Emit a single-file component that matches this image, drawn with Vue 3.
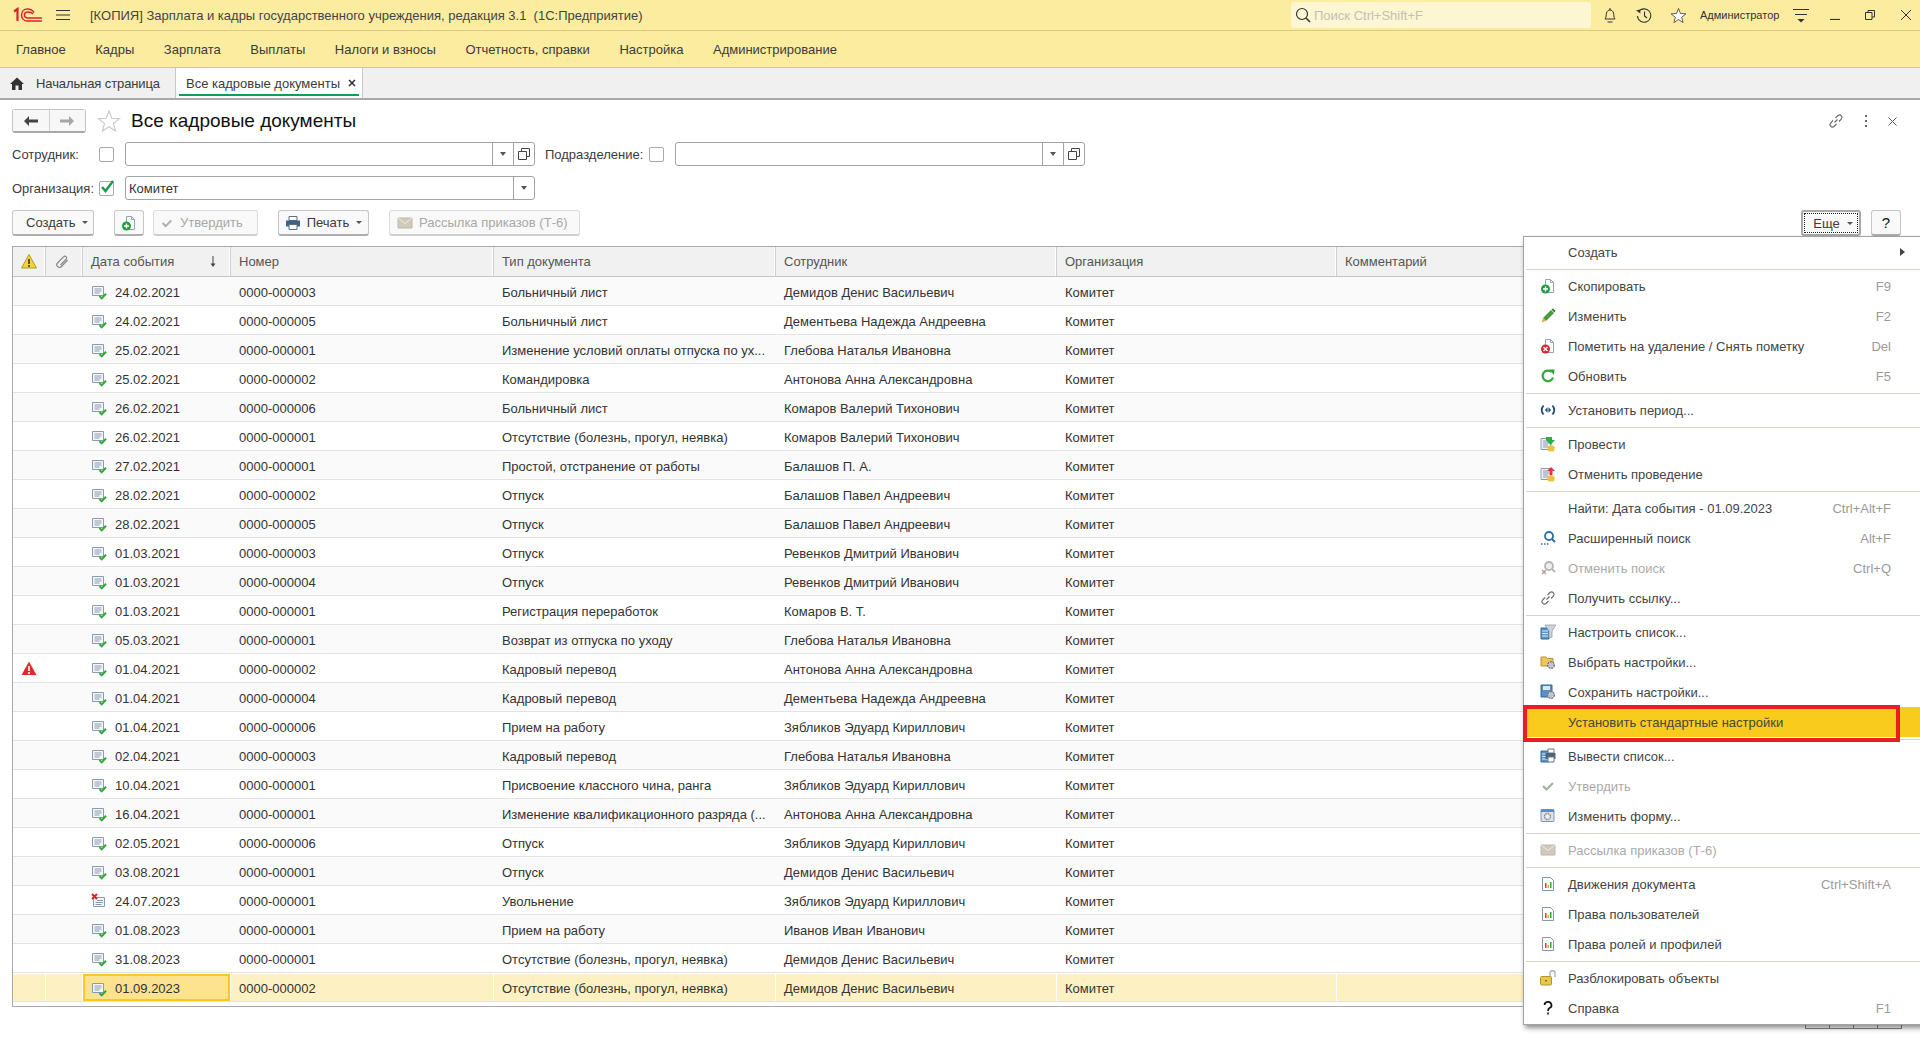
<script setup>
const mainMenu = ['Главное', 'Кадры', 'Зарплата', 'Выплаты', 'Налоги и взносы', 'Отчетность, справки', 'Настройка', 'Администрирование'];

const demidov = 'Демидов Денис Васильевич';
const dement = 'Дементьева Надежда Андреевна';
const glebova = 'Глебова Наталья Ивановна';
const antonova = 'Антонова Анна Александровна';
const komarov = 'Комаров Валерий Тихонович';
const balashov = 'Балашов Павел Андреевич';
const revenkov = 'Ревенков Дмитрий Иванович';
const zyablikov = 'Зябликов Эдуард Кириллович';
const absence = 'Отсутствие (болезнь, прогул, неявка)';

const rows = [
  ['24.02.2021', '0000-000003', 'Больничный лист', demidov],
  ['24.02.2021', '0000-000005', 'Больничный лист', dement],
  ['25.02.2021', '0000-000001', 'Изменение условий оплаты отпуска по ух...', glebova],
  ['25.02.2021', '0000-000002', 'Командировка', antonova],
  ['26.02.2021', '0000-000006', 'Больничный лист', komarov],
  ['26.02.2021', '0000-000001', absence, komarov],
  ['27.02.2021', '0000-000001', 'Простой, отстранение от работы', 'Балашов П. А.'],
  ['28.02.2021', '0000-000002', 'Отпуск', balashov],
  ['28.02.2021', '0000-000005', 'Отпуск', balashov],
  ['01.03.2021', '0000-000003', 'Отпуск', revenkov],
  ['01.03.2021', '0000-000004', 'Отпуск', revenkov],
  ['01.03.2021', '0000-000001', 'Регистрация переработок', 'Комаров В. Т.'],
  ['05.03.2021', '0000-000001', 'Возврат из отпуска по уходу', glebova],
  ['01.04.2021', '0000-000002', 'Кадровый перевод', antonova, 'warn'],
  ['01.04.2021', '0000-000004', 'Кадровый перевод', dement],
  ['01.04.2021', '0000-000006', 'Прием на работу', zyablikov],
  ['02.04.2021', '0000-000003', 'Кадровый перевод', glebova],
  ['10.04.2021', '0000-000001', 'Присвоение классного чина, ранга', zyablikov],
  ['16.04.2021', '0000-000001', 'Изменение квалификационного разряда (...', antonova],
  ['02.05.2021', '0000-000006', 'Отпуск', zyablikov],
  ['03.08.2021', '0000-000001', 'Отпуск', demidov],
  ['24.07.2023', '0000-000001', 'Увольнение', zyablikov, 'off'],
  ['01.08.2023', '0000-000001', 'Прием на работу', 'Иванов Иван Иванович'],
  ['31.08.2023', '0000-000001', absence, demidov],
  ['01.09.2023', '0000-000002', absence, demidov, 'sel']
];

// sep: true draws the thin line between groups
const popup = [
  { t: 'Создать', arrow: true },
  { sep: true },
  { t: 'Скопировать', i: 'i-copy', k: 'F9' },
  { t: 'Изменить', i: 'i-pencil', k: 'F2' },
  { t: 'Пометить на удаление / Снять пометку', i: 'i-del', k: 'Del' },
  { t: 'Обновить', i: 'i-refresh', k: 'F5' },
  { sep: true },
  { t: 'Установить период...', i: 'i-period' },
  { sep: true },
  { t: 'Провести', i: 'i-post' },
  { t: 'Отменить проведение', i: 'i-unpost' },
  { sep: true },
  { t: 'Найти: Дата события - 01.09.2023', k: 'Ctrl+Alt+F' },
  { t: 'Расширенный поиск', i: 'i-search', k: 'Alt+F' },
  { t: 'Отменить поиск', i: 'i-nosearch', k: 'Ctrl+Q', off: true },
  { t: 'Получить ссылку...', i: 'i-link' },
  { sep: true },
  { t: 'Настроить список...', i: 'i-filter' },
  { t: 'Выбрать настройки...', i: 'i-folder' },
  { t: 'Сохранить настройки...', i: 'i-save' },
  { t: 'Установить стандартные настройки', active: true },
  { sep: true },
  { t: 'Вывести список...', i: 'i-print2' },
  { t: 'Утвердить', i: 'i-check', off: true },
  { t: 'Изменить форму...', i: 'i-form' },
  { sep: true },
  { t: 'Рассылка приказов (Т-6)', i: 'i-mail', off: true },
  { sep: true },
  { t: 'Движения документа', i: 'i-chart', k: 'Ctrl+Shift+A' },
  { t: 'Права пользователей', i: 'i-chart' },
  { t: 'Права ролей и профилей', i: 'i-chart' },
  { sep: true },
  { t: 'Разблокировать объекты', i: 'i-lock' },
  { t: 'Справка', i: 'i-help', k: 'F1' }
];
</script>

<template>
  <div class="page">
    <svg class="defs" xmlns="http://www.w3.org/2000/svg">
      <symbol id="i-doc" viewBox="0 0 16 16">
        <path d="M1.5 2.5h11v9h-11z" fill="#f4f6f8" stroke="#8a9bb0"/>
        <path d="M3.5 5h7M3.5 7h7M3.5 9h5" stroke="#8a9bb0"/>
        <path d="M8.5 12l2.2 2.4L15 9.8" fill="none" stroke="#2fa836" stroke-width="2"/>
      </symbol>
      <symbol id="i-docoff" viewBox="0 0 16 16">
        <path d="M2.5 4.500h11v9h-11z" fill="#f4f6f8" stroke="#8a9bb0"/>
        <path d="M6 7.500h6M4.500 9.500h7.500M4.500 11.500h6" stroke="#8a9bb0"/>
        <path d="M1 1l5 5M6 1L1 6" stroke="#e02020" stroke-width="2"/>
      </symbol>
      <symbol id="i-copy" viewBox="0 0 16 16">
        <path d="M5.500 1.500h5l3 3v10h-8z" fill="#fff" stroke="#93a4b6"/>
        <path d="M10.500 1.500v3h3" fill="none" stroke="#93a4b6"/>
        <circle cx="5.500" cy="11" r="4.500" fill="#1f9d3f"/>
        <path d="M3 11h5M5.500 8.500v5" stroke="#fff" stroke-width="1.400"/>
      </symbol>
      <symbol id="i-pencil" viewBox="0 0 16 16">
        <path d="M11 2l3 3-8 8-3-3z" fill="#4a9a3c"/>
        <path d="M11.500 1.500l3 3 1-1.500-2.500-2.500z" fill="#2e6f27"/>
        <path d="M3 10l3 3-4.500 1.500z" fill="#e8a85c"/>
      </symbol>
      <symbol id="i-del" viewBox="0 0 16 16">
        <path d="M5.500 1.500h5l3 3v10h-8z" fill="#fff" stroke="#93a4b6"/>
        <path d="M10.500 1.500v3h3" fill="none" stroke="#93a4b6"/>
        <circle cx="5.500" cy="11" r="4.500" fill="#d8262c"/>
        <path d="M3.500 9l4 4M7.500 9l-4 4" stroke="#fff" stroke-width="1.400"/>
      </symbol>
      <symbol id="i-refresh" viewBox="0 0 16 16">
        <path d="M13 9.500A5.300 5.300 0 1 1 11.500 4" fill="none" stroke="#2fa836" stroke-width="2.200"/>
        <path d="M9 1.500l5.500 0-.5 5.500z" fill="#2fa836"/>
      </symbol>
      <symbol id="i-period" viewBox="0 0 18 16">
        <path d="M4 3C1.500 6 1.500 10 4 13M14 3c2.500 3 2.500 7 0 10" fill="none" stroke="#1f4e79" stroke-width="2"/>
        <path d="M8.500 5v6L5.500 8zM9.500 5v6l3-3z" fill="#1f4e79"/>
      </symbol>
      <symbol id="i-post" viewBox="0 0 16 16">
        <path d="M1 2.500h10v11h-10z" fill="#eef2f6" stroke="#8a9bb0"/>
        <path d="M3 5h6M3 7h6M3 9h5M3 11h5" stroke="#8a9bb0"/>
        <path d="M6 1h6v3h3l-4.500 5L6 4z" fill="#25b04b"/>
        <ellipse cx="11" cy="11" rx="3.500" ry="1.500" fill="#e8c33c"/>
        <path d="M7.500 11v3c0 2 7 2 7 0v-3" fill="#e8c33c"/>
      </symbol>
      <symbol id="i-unpost" viewBox="0 0 16 16">
        <path d="M1 2.500h10v11h-10z" fill="#eef2f6" stroke="#8a9bb0"/>
        <path d="M3 5h6M3 7h6M3 9h5M3 11h5" stroke="#8a9bb0"/>
        <path d="M11 1l4 4h-2.500v4h-3V5H7z" fill="#e5343c"/>
        <ellipse cx="11" cy="11" rx="3.500" ry="1.500" fill="#e8c33c"/>
        <path d="M7.500 11v3c0 2 7 2 7 0v-3" fill="#e8c33c"/>
      </symbol>
      <symbol id="i-search" viewBox="0 0 16 16">
        <circle cx="9" cy="6" r="4" fill="#fff" stroke="#2d6da3" stroke-width="1.800"/>
        <path d="M12 9l3 3" stroke="#2d6da3" stroke-width="2"/>
        <path d="M1 14h1.500M4 14h1.500M7 14h1.500" stroke="#2d6da3" stroke-width="1.500"/>
      </symbol>
      <symbol id="i-nosearch" viewBox="0 0 16 16">
        <circle cx="9" cy="6" r="4" fill="#eee" stroke="#b5b5b5" stroke-width="1.800"/>
        <path d="M12 9l3 3" stroke="#b5b5b5" stroke-width="2"/>
        <path d="M2 10l4 4M6 10l-4 4" stroke="#c09a9a" stroke-width="1.500"/>
      </symbol>
      <symbol id="i-link" viewBox="0 0 16 16">
        <path d="M6.500 9.500l3-3M5 7.500l-2.500 2.500a2.500 2.500 0 0 0 3.500 3.500L8.500 11M7.500 5L10 2.500A2.500 2.500 0 0 1 13.500 6L11 8.500" fill="none" stroke="#666" stroke-width="1.100"/>
      </symbol>
      <symbol id="i-filter" viewBox="0 0 16 16">
        <path d="M1 4h8v11H1z" fill="#5b94c6" stroke="#2f699b"/>
        <path d="M2 7h6M2 9.500h6M2 12h6" stroke="#d7e6f3"/>
        <path d="M5 1h11l-4 6v6l-3 1V7z" fill="#cdd3d9" stroke="#8a97a3" stroke-width=".7"/>
      </symbol>
      <symbol id="i-folder" viewBox="0 0 16 16">
        <path d="M1 3h5l1.500 1.500H13V12H1z" fill="#eec55e" stroke="#b8923a"/>
        <circle cx="11" cy="11" r="3.300" fill="#d9dde1" stroke="#6f7780" stroke-width="1.500" stroke-dasharray="2 .8"/>
        <circle cx="11" cy="11" r="1.200" fill="#fff" stroke="#6f7780" stroke-width=".6"/>
      </symbol>
      <symbol id="i-save" viewBox="0 0 16 16">
        <path d="M1 1h11v12H1z" fill="#5b8fc2" stroke="#2f699b"/>
        <path d="M3 2h7v4H3z" fill="#dbe7f2"/>
        <circle cx="11" cy="11" r="3.300" fill="#d9dde1" stroke="#6f7780" stroke-width="1.500" stroke-dasharray="2 .8"/>
        <circle cx="11" cy="11" r="1.200" fill="#fff" stroke="#6f7780" stroke-width=".6"/>
      </symbol>
      <symbol id="i-print2" viewBox="0 0 16 16">
        <path d="M1 3h8v11H1z" fill="#5b94c6" stroke="#2f699b"/>
        <path d="M2 6h6M2 8.500h6M2 11h6" stroke="#d7e6f3"/>
        <path d="M8 1h6v4H8z" fill="#fff" stroke="#6f7780"/>
        <path d="M5.500 5h10v6h-10z" fill="#4c6478"/>
        <path d="M8 9h6v5H8z" fill="#fff" stroke="#6f7780"/>
      </symbol>
      <symbol id="i-check" viewBox="0 0 16 16">
        <path d="M3 8l3.500 3.500L13 5" fill="none" stroke="#a3b3a3" stroke-width="2.200"/>
      </symbol>
      <symbol id="i-form" viewBox="0 0 16 16">
        <rect x="1" y="1.500" width="13" height="12" rx="1" fill="#dfe3e7" stroke="#7d97b3"/>
        <path d="M1 1.500h13v2.500H1z" fill="#4a90d9"/>
        <circle cx="7.500" cy="8.500" r="3" fill="#eee" stroke="#7b8288" stroke-width="1.300" stroke-dasharray="1.600 .7"/>
      </symbol>
      <symbol id="i-mail" viewBox="0 0 16 16">
        <path d="M1 3h14v10H1z" fill="#cfcabb" stroke="#bdb8a8"/>
        <path d="M1 3l7 5.500L15 3" fill="none" stroke="#efece3"/>
      </symbol>
      <symbol id="i-chart" viewBox="0 0 16 16">
        <path d="M2.500 1.500h8l3 3v10h-11z" fill="#fff" stroke="#8296ad"/>
        <path d="M5 7h1.500v5H5z" fill="#e33"/>
        <path d="M7.500 9H9v3H7.500z" fill="#e8a33c"/>
        <path d="M10 6h1.500v6H10z" fill="#2fa836"/>
      </symbol>
      <symbol id="i-lock" viewBox="0 0 16 16">
        <path d="M10 8V3a2.500 2.500 0 0 1 5 0v4" fill="none" stroke="#aaa" stroke-width="1.300"/>
        <rect x=".500" y="6.500" width="11" height="8.500" rx="1" fill="#e7c74f" stroke="#b2942c"/>
        <rect x="5" y="10" width="2" height="1.500" fill="#8a6d14"/>
      </symbol>
      <symbol id="i-print" viewBox="0 0 16 16">
        <path d="M4 1.500h8v4H4z" fill="#fff" stroke="#5a6f84"/>
        <path d="M1 5.500h14v6H1z" fill="#3f6186"/>
        <path d="M4 9.500h8v5H4z" fill="#fff" stroke="#5a6f84"/>
      </symbol>
      <symbol id="i-star" viewBox="0 0 24 24">
        <path d="M12 2l2.800 7.200 7.700.4-6 4.900 2 7.500L12 17.700 5.500 22l2-7.500-6-4.900 7.700-.4z" fill="#fff" stroke="currentColor" stroke-width="1.100"/>
      </symbol>
    </svg>

    <header class="topbar">
      <svg class="logo" width="30" height="16" viewBox="0 0 30 16">
        <path d="M1 4.500L4.500 2v12" fill="none" stroke="#d8232a" stroke-width="2.200"/>
        <path d="M21 5.500C19.500 3 17 2 14.500 2 11 2 8.500 4.500 8.500 8s2.500 6 6 6H29M20 7c-1-1.400-3-2-5-2-2.200 0-3.500 1.400-3.500 3s1.300 3 3.500 3h14" fill="none" stroke="#d8232a" stroke-width="1.500"/>
      </svg>
      <svg class="burger" width="14" height="12" viewBox="0 0 14 12"><path d="M0 1.500h14M0 6h14M0 10.500h14" stroke="#333" stroke-width="1"/></svg>
      <div class="app-title">[КОПИЯ] Зарплата и кадры государственного учреждения, редакция 3.1&nbsp; (1С:Предприятие)</div>
      <div class="search">
        <svg width="16" height="16" viewBox="0 0 16 16"><circle cx="7" cy="7" r="5.500" fill="none" stroke="#333" stroke-width="1.200"/><path d="M11 11l4 4" stroke="#333" stroke-width="1.600"/></svg>
        <span>Поиск Ctrl+Shift+F</span>
      </div>
      <svg class="tool t-bell" width="16" height="17" viewBox="0 0 16 17"><path d="M3 12c1.500-2 1-4 1.500-6 .5-2 2-3 3.500-3s3 1 3.500 3c.5 2 0 4 1.500 6zM8 3V1M5.500 15h5" fill="none" stroke="#333"/></svg>
      <svg class="tool t-hist" width="18" height="17" viewBox="0 0 18 17"><path d="M3.500 5A6.700 6.700 0 1 1 2.500 9M9.500 4.500V9l2.500 2" fill="none" stroke="#333" stroke-width="1.100"/><path d="M1 3.500l4-1 .5 4z" fill="#333"/></svg>
      <svg class="tool t-star" width="17" height="17" viewBox="0 0 24 24"><use href="#i-star" color="#333"/></svg>
      <span class="user">Администратор</span>
      <svg class="tool t-set" width="16" height="15" viewBox="0 0 16 15"><path d="M0 1.500h16M2 6.500h12" stroke="#333"/><path d="M4.500 11h7L8 14.500z" fill="#333"/></svg>
      <div class="win-btns">
        <svg width="10" height="10" viewBox="0 0 10 10"><path d="M0 9.500h10" stroke="#333" stroke-width="1.200"/></svg>
        <svg width="10" height="10" viewBox="0 0 10 10"><path d="M.5 2.500h6.500v7H.5zM3 2.500V.5h6.500v6.500H7" fill="none" stroke="#333"/></svg>
        <svg width="12" height="12" viewBox="0 0 12 12"><path d="M1 1l10 10M11 1L1 11" stroke="#333"/></svg>
      </div>
    </header>

    <nav class="mainmenu">
      <span v-for="m in mainMenu" :key="m">{{ m }}</span>
    </nav>

    <div class="tabs">
      <div class="tab home">
        <svg width="14" height="13" viewBox="0 0 14 13"><path d="M7 .5L0 7h2v6h3.500V8.500h3V13H12V7h2z" fill="#333"/></svg>
        <span>Начальная страница</span>
      </div>
      <div class="tab current">
        <span>Все кадровые документы</span>
        <svg width="8" height="8" viewBox="0 0 8 8"><path d="M1 1l6 6M7 1L1 7" stroke="#333" stroke-width="1.600"/></svg>
      </div>
    </div>

    <main class="form">
      <div class="form-head">
        <div class="nav-btns">
          <button class="nav-b"><svg width="14" height="10" viewBox="0 0 14 10"><path d="M5 0v3.500h9v3H5V10L0 5z" fill="#444"/></svg></button>
          <button class="nav-b"><svg width="14" height="10" viewBox="0 0 14 10"><path d="M9 0v3.500H0v3h9V10l5-5z" fill="#a6a6a6"/></svg></button>
        </div>
        <svg class="fav" width="24" height="24" viewBox="0 0 24 24"><use href="#i-star" color="#c8c8c8"/></svg>
        <h1>Все кадровые документы</h1>
        <div class="head-tools">
          <svg width="16" height="20" viewBox="0 0 16 16"><use href="#i-link"/></svg>
          <svg width="4" height="14" viewBox="0 0 4 14"><path d="M2 1v2M2 6v2M2 11v2" stroke="#666" stroke-width="2"/></svg>
          <svg width="9" height="9" viewBox="0 0 9 9"><path d="M.5.500l8 8M8.500.500l-8 8" stroke="#555"/></svg>
        </div>
      </div>

      <div class="filter">
        <label class="f-label">Сотрудник:</label>
        <span class="chk"></span>
        <div class="field w-long">
          <span class="val"></span>
          <span class="btn-drop"><i></i></span>
          <span class="btn-open"><svg width="12" height="12" viewBox="0 0 12 12"><path d="M3.500 3.500V.5h8v8h-3M.5 3.500h8v8h-8z" fill="none" stroke="#444"/></svg></span>
        </div>
        <label class="f-label2">Подразделение:</label>
        <span class="chk"></span>
        <div class="field w-dept">
          <span class="val"></span>
          <span class="btn-drop"><i></i></span>
          <span class="btn-open"><svg width="12" height="12" viewBox="0 0 12 12"><path d="M3.500 3.500V.5h8v8h-3M.5 3.500h8v8h-8z" fill="none" stroke="#444"/></svg></span>
        </div>
      </div>

      <div class="filter">
        <label class="f-label">Организация:</label>
        <span class="chk"><svg width="14" height="14" viewBox="0 0 14 14"><path d="M2 7l3.500 4L13 1" fill="none" stroke="#1a9a4a" stroke-width="2.400"/></svg></span>
        <div class="field w-long">
          <span class="val">Комитет</span>
          <span class="btn-drop"><i></i></span>
        </div>
      </div>

      <div class="toolbar">
        <button class="btn w-create">Создать<i class="caret"></i></button>
        <button class="btn w-icon"><svg width="16" height="16" viewBox="0 0 16 16"><use href="#i-copy"/></svg></button>
        <button class="btn off w-approve"><svg width="14" height="14" viewBox="0 0 16 16"><use href="#i-check"/></svg>Утвердить</button>
        <button class="btn w-print"><svg width="16" height="16" viewBox="0 0 16 16"><use href="#i-print"/></svg>Печать<i class="caret"></i></button>
        <button class="btn off w-mail"><svg width="16" height="16" viewBox="0 0 16 16"><use href="#i-mail"/></svg>Рассылка приказов (Т-6)</button>
        <div class="spacer"></div>
        <button class="btn focus w-more"><span class="dots">Еще<i class="caret"></i></span></button>
        <button class="btn w-help">?</button>
      </div>

      <section class="table">
        <div class="thead grid">
          <div class="th center">
            <svg width="16" height="15" viewBox="0 0 16 15"><path d="M8 .5L15.500 14H.5z" fill="#f3d23c" stroke="#b59a1e"/><path d="M8 5v5M8 11v2" stroke="#333" stroke-width="1.600"/></svg>
          </div>
          <div class="th center clip">
            <svg width="14" height="14" viewBox="0 0 14 14"><path d="M12.500 5L6.500 11.500a2.500 2.500 0 0 1-4-3.500L8.500 1.800a1.700 1.700 0 0 1 2.700 2.300L5.500 10" fill="none" stroke="#888" stroke-width="1.200"/></svg>
          </div>
          <div class="th between">Дата события<svg width="6" height="11" viewBox="0 0 6 11"><path d="M3 0v9" stroke="#444"/><path d="M.5 7.500h5L3 11z" fill="#444"/></svg></div>
          <div class="th">Номер</div>
          <div class="th">Тип документа</div>
          <div class="th">Сотрудник</div>
          <div class="th">Организация</div>
          <div class="th">Комментарий</div>
        </div>
        <div v-for="(r, n) in rows" :key="n" class="row grid" :class="{ zebra: n % 2 === 0, selected: r[4] === 'sel' }">
          <div class="td center">
            <svg v-if="r[4] === 'warn'" class="warn" width="16" height="15" viewBox="0 0 16 15"><path d="M8 .5L15.500 14H.5z" fill="#e02b2b"/><path d="M8 5v5M8 11v2" stroke="#fff" stroke-width="1.600"/></svg>
          </div>
          <div class="td"></div>
          <div class="td date" :class="{ focused: r[4] === 'sel' }">
            <svg width="16" height="16" viewBox="0 0 16 16"><use :href="r[4] === 'off' ? '#i-docoff' : '#i-doc'"/></svg>
            <span>{{ r[0] }}</span>
          </div>
          <div class="td">{{ r[1] }}</div>
          <div class="td">{{ r[2] }}</div>
          <div class="td">{{ r[3] }}</div>
          <div class="td">Комитет</div>
          <div class="td"></div>
        </div>
      </section>
      <div class="pager"><span></span><span></span><span></span><span></span></div>
    </main>

    <div class="popup">
      <template v-for="(p, n) in popup" :key="n">
        <div v-if="p.sep" class="p-sep"></div>
        <div v-else class="p-item" :class="{ off: p.off, active: p.active }">
          <span class="p-icon">
            <svg v-if="p.i === 'i-help'" width="16" height="16" viewBox="0 0 16 16"><path d="M4.500 5a3.500 3.200 0 1 1 5 3c-1 .7-1.500 1.200-1.500 3M8 12.500v2" fill="none" stroke="#111" stroke-width="1.700"/></svg>
            <svg v-else-if="p.i" width="16" height="16" viewBox="0 0 16 16"><use :href="'#' + p.i"/></svg>
          </span>
          <span class="p-text">{{ p.t }}</span>
          <span v-if="p.k" class="p-key">{{ p.k }}</span>
          <i v-if="p.arrow" class="p-arrow"></i>
        </div>
      </template>
      <div class="mark"></div>
    </div>
  </div>
</template>

<style>
html, body {
  margin: 0;
  background: #fff;
  overflow: hidden;
}
</style>

<style scoped>
.page {
  position: relative;
  width: 1920px;
  height: 1037px;
  overflow: hidden;
  background: #fff;
  font-family: "Liberation Sans", Arial, sans-serif;
  font-size: 13px;
  color: #3b3b3b;
}
.defs {
  display: none;
}

.topbar {
  display: flex;
  align-items: center;
  height: 30px;
  background: #fbeca0;
  border-bottom: 1px solid #d9c97e;
}
.logo {
  margin-left: 13px;
}
.burger {
  margin-left: 13px;
}
.app-title {
  margin-left: 20px;
  flex: 1;
  white-space: nowrap;
  color: #444;
}
.search {
  display: flex;
  align-items: center;
  gap: 3px;
  width: 296px;
  height: 26px;
  padding-left: 4px;
  background: #fdf6d3;
  border-radius: 3px;
  color: #c4c0b0;
}
.tool {
  flex: none;
}
.t-bell {
  margin-left: 11px;
}
.t-hist {
  margin-left: 17px;
}
.t-star {
  margin-left: 17px;
}
.user {
  margin-left: 13px;
  font-size: 11px;
  color: #333;
  width: 87px;
}
.t-set {
  margin-left: 6px;
}
.win-btns {
  display: flex;
  align-items: center;
  gap: 25px;
  margin-left: 21px;
  margin-right: 8px;
}

.mainmenu {
  display: flex;
  align-items: center;
  gap: 29.6px;
  height: 36px;
  padding-left: 16px;
  background: #fbeca0;
  border-bottom: 1px solid #d9c97e;
}

.tabs {
  display: flex;
  box-sizing: border-box;
  height: 32px;
  background: #f0f0f0;
  border-bottom: 2px solid #a9a9a9;
}
.tab {
  display: flex;
  align-items: center;
  box-sizing: border-box;
  height: 30px;
}
.tab.home {
  width: 176px;
  padding-left: 10px;
  gap: 12px;
  border-right: 1px solid #c8c8c8;
}
.tab.home span {
  letter-spacing: -0.1px;
}
.tab.current {
  width: 187px;
  padding-left: 10px;
  gap: 8px;
  background: #fff;
  border-right: 1px solid #c8c8c8;
  position: relative;
}
.tab.current::after {
  content: "";
  position: absolute;
  left: 3px;
  right: 3px;
  bottom: 2px;
  height: 2px;
  background: #0f9d58;
}

.form {
  padding: 8px 0 0 12px;
}
.form-head {
  display: flex;
  align-items: center;
  height: 26px;
}
.nav-btns {
  display: flex;
  width: 74px;
  height: 24px;
  box-sizing: border-box;
  border: 1px solid #c4c4c4;
  border-bottom: 2px solid #a9a9a9;
  border-radius: 3px;
}
.nav-b {
  flex: 1;
  display: flex;
  align-items: center;
  justify-content: center;
  padding: 0;
  background: #f7f7f7;
  border: 0;
}
.nav-b + .nav-b {
  border-left: 1px solid #d0d0d0;
}
.fav {
  margin-left: 11px;
}
h1 {
  margin: 0 0 0 10px;
  font-size: 19px;
  font-weight: normal;
  color: #111;
  flex: 1;
}
.head-tools {
  display: flex;
  align-items: center;
  gap: 20px;
  margin-right: 23px;
}

.filter {
  display: flex;
  align-items: center;
  height: 24px;
  margin-top: 8px;
}
.filter + .filter {
  margin-top: 10px;
}
.f-label {
  width: 87px;
  white-space: nowrap;
}
.f-label2 {
  width: 104px;
  margin-left: 10px;
  white-space: nowrap;
}
.chk {
  display: flex;
  align-items: center;
  justify-content: center;
  box-sizing: border-box;
  width: 15px;
  height: 15px;
  border: 1px solid #a9a9a9;
  border-radius: 2px;
  margin-right: 11px;
}
.chk svg {
  margin-top: -3px;
  margin-left: 1px;
  flex: none;
}
.field {
  display: flex;
  box-sizing: border-box;
  height: 24px;
  border: 1px solid #a3a3a3;
  border-radius: 3px;
}
.w-long {
  width: 410px;
}
.w-dept {
  width: 410px;
}
.val {
  flex: 1;
  padding: 1px 0 0 3px;
  line-height: 22px;
  color: #333;
}
.btn-drop, .btn-open {
  display: flex;
  align-items: center;
  justify-content: center;
  width: 20px;
  border-left: 1px solid #a3a3a3;
}
.btn-drop i {
  border-left: 3px solid transparent;
  border-right: 3px solid transparent;
  border-top: 4px solid #555;
}

.toolbar {
  display: flex;
  align-items: center;
  height: 26px;
  margin-top: 10px;
  padding-right: 19px;
}
.btn {
  display: flex;
  align-items: center;
  justify-content: center;
  gap: 6px;
  box-sizing: border-box;
  height: 26px;
  padding: 0;
  background: #f9f9f9;
  border: 1px solid #c6c6c6;
  border-bottom: 2px solid #aeaeae;
  border-radius: 3px;
  font: inherit;
  color: #3b3b3b;
}
.btn.off {
  color: #a8a8a8;
  border-color: #dcdcdc;
  border-bottom-color: #cfcfcf;
}
.caret {
  display: inline-block;
  margin-left: 1px;
  border-left: 3px solid transparent;
  border-right: 3px solid transparent;
  border-top: 3px solid #555;
}
.w-create {
  width: 82px;
  justify-content: flex-start;
  padding-left: 13px;
}
.w-icon { width: 30px; margin-left: 20px; }
.w-approve {
  width: 105px;
  margin-left: 9px;
  justify-content: flex-start;
  padding-left: 6px;
}
.w-print { width: 91px; margin-left: 20px; }
.w-mail {
  width: 191px;
  margin-left: 20px;
  justify-content: flex-start;
  padding-left: 7px;
}
.spacer { flex: 1; }
.w-more {
  width: 60px;
  border: 2px solid #a9a9a9;
}
.dots {
  display: flex;
  align-items: center;
  justify-content: center;
  gap: 6px;
  width: 54px;
  height: 20px;
  padding-left: 4px;
  box-sizing: border-box;
  border: 1px dotted #222;
}
.w-help {
  width: 30px;
  margin-left: 10px;
  font-size: 15px;
  color: #111;
}

.table {
  box-sizing: border-box;
  width: 1893px;
  height: 761px;
  margin-top: 10px;
  border: 1px solid #a9a9a9;
}
.grid {
  display: grid;
  grid-template-columns: 33px 37px 148px 263px 282px 281px 280px 1fr;
}
.thead {
  box-sizing: border-box;
  height: 30px;
  border-bottom: 1px solid #c4c4c4;
}
.th {
  display: flex;
  align-items: center;
  padding-left: 8px;
  background: #f1f1f1;
  border-right: 1px solid #cfcfcf;
  color: #555;
  box-shadow: inset -1px 0 0 #fff;
}
.th.center {
  padding: 0;
  justify-content: center;
}
.th.clip {
  padding-right: 4px;
}
.th.between {
  justify-content: space-between;
  padding-right: 14px;
}
.row {
  height: 29px;
  box-sizing: border-box;
  border-bottom: 1px solid #e3e3e3;
}
.row.zebra {
  background: #fafafa;
}
.td {
  display: flex;
  align-items: center;
  padding: 2px 0 0 8px;
  white-space: nowrap;
  overflow: hidden;
  color: #333;
}
.td.center {
  padding: 0;
  justify-content: center;
}
.warn {
  margin-right: 2px;
}
.td.date {
  gap: 8px;
}
.row.selected {
  height: 28px;
  background: #fdf1c3;
  margin-top: 1px;
}
.row.selected .td {
  border-right: 1px solid #fff;
}
.td.focused {
  background: #fde28f;
  box-shadow: inset 0 0 0 2px #f9c91e;
}

.pager {
  position: absolute;
  left: 1805px;
  top: 1010px;
  display: flex;
  height: 17px;
  border: 1px solid #888;
  border-left: 0;
}
.pager span {
  width: 23px;
  border-left: 1px solid #888;
}

.popup {
  position: absolute;
  left: 1523px;
  top: 236px;
  box-sizing: border-box;
  width: 400px;
  height: 789px;
  background: #fff;
  border: 1px solid #a3a3a3;
  box-shadow: 2px 3px 5px rgba(0, 0, 0, 0.45);
}
.p-item {
  display: flex;
  align-items: center;
  height: 30px;
  color: #444;
}
.p-icon {
  display: flex;
  align-items: center;
  justify-content: center;
  width: 20px;
  margin-left: 14px;
}
.p-text {
  margin-left: 10px;
  flex: 1;
  white-space: nowrap;
}
.p-key {
  margin-right: 31px;
  color: #9a9a9a;
}
.p-arrow {
  margin-right: 17px;
  border-top: 4px solid transparent;
  border-bottom: 4px solid transparent;
  border-left: 5px solid #444;
}
.p-item.off .p-text {
  color: #aaa;
}
.p-item.active {
  background: #f9cb1c;
  margin-left: 2px;
}
.p-item.active .p-icon {
  margin-left: 12px;
}
.p-sep {
  height: 1px;
  margin: 2px 0 1px 2px;
  background: #d8d3c4;
}
.mark {
  position: absolute;
  left: -1px;
  top: 468px;
  box-sizing: border-box;
  width: 377px;
  height: 37px;
  border: 4px solid #ed1c24;
}
</style>
